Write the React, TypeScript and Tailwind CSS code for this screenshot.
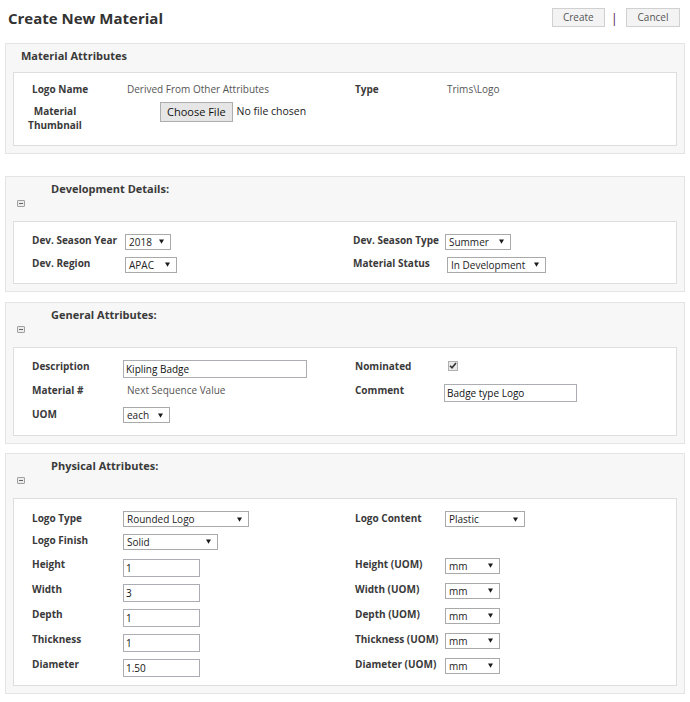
import React from "react";

const LBL = "font-bold text-[10px] leading-[14px] text-[#3a3a3a] pb-[3px] whitespace-nowrap";
const VAL = "text-[10px] leading-[14px] text-[#555] pb-[3px] whitespace-nowrap";

function Arrow() {
  return (
    <svg width="5" height="5" viewBox="0 0 5 5" className="shrink-0">
      <path d="M0 0.5 H5 L2.5 4.8 Z" fill="#1a1a1a" />
    </svg>
  );
}

function Sel({ w, text, extra = "" }: { w: string; text: string; extra?: string }) {
  return (
    <div
      className={`${w} ${extra} h-[16px] border border-[#a9a9a9] bg-white flex items-center justify-between pl-[3px] pr-[6px] text-[10px] leading-[14px] text-[#222]`}
    >
      <span className="whitespace-nowrap">{text}</span>
      <Arrow />
    </div>
  );
}

function Inp({ w, value, extra = "" }: { w: string; value: string; extra?: string }) {
  return (
    <input
      readOnly
      value={value}
      className={`${w} ${extra} h-[18px] border border-[#abadb3] bg-white pl-[2px] text-[10px] leading-[16px] text-[#111] font-['Open_Sans',sans-serif] outline-none`}
    />
  );
}

function Collapse() {
  return (
    <div className="ml-[4px] mt-[3px] w-[8px] h-[7px] border border-[#a0a0a0] bg-[#ececec] rounded-[1px] flex items-center justify-center">
      <div className="w-[4px] h-[1px] bg-[#666]" />
    </div>
  );
}

function Panel({ title, collapsible, mt, children }: { title: string; collapsible: boolean; mt: string; children: React.ReactNode }) {
  return (
    <div className={`${mt} mx-[5px] border border-[#e4e4e4] bg-[#f7f7f7] px-[7px] pb-[7px]`}>
      {collapsible ? (
        <div className="h-[44px] flex flex-col">
          <div className="pt-[4px] ml-[38px] text-[11px] leading-[16px] font-bold text-[#3a3a3a]">{title}</div>
          <Collapse />
        </div>
      ) : (
        <div className="h-[28px] pt-[4px] ml-[8px] text-[11px] leading-[16px] font-bold text-[#3a3a3a]">{title}</div>
      )}
      <div className="border border-[#dedede] bg-white">{children}</div>
    </div>
  );
}

const GRID = "grid grid-cols-[91px_232px_90px_1fr] pl-[18px]";

export default function App() {
  return (
    <div className="w-[690px] min-h-[702px] bg-white font-['Open_Sans',sans-serif] pb-[6px]">
      {/* Top header */}
      <div className="h-[35px] flex items-center justify-between pl-[8px] pr-[10px]">
        <div className="text-[15px] leading-[20px] font-bold text-[#333]">Create New Material</div>
        <div className="flex items-center">
          <div className="w-[53px] h-[19px] border border-[#d0d0d0] bg-[#f3f3f3] flex items-center justify-center text-[10px] text-[#555]">
            Create
          </div>
          <div className="mx-[6px] text-[13px] leading-[14px] text-[#5a1f4f]">|</div>
          <div className="ml-[2px] w-[54px] h-[19px] border border-[#d0d0d0] bg-[#f3f3f3] flex items-center justify-center text-[10px] text-[#555]">
            Cancel
          </div>
        </div>
      </div>

      {/* Material Attributes */}
      <Panel title="Material Attributes" collapsible={false} mt="mt-[8px]">
        <div className="pt-[8px] pb-[11px]">
          <div className={`${GRID} h-[18px] items-center`}>
            <div className={LBL}>Logo Name</div>
            <div className={`${VAL} pl-[4px]`}>Derived From Other Attributes</div>
            <div className={LBL}>Type</div>
            <div className={`${VAL} pl-[2px]`}>Trims\Logo</div>
          </div>
          <div className={`${GRID} h-[32px] mt-[3px] items-start`}>
            <div className="-ml-[4px] mt-[2px] w-[54px] text-center font-bold text-[10px] leading-[14px] text-[#3a3a3a]">
              Material
              <br />
              Thumbnail
            </div>
            <div className="col-span-3 flex items-center ml-[37px]">
              <div className="h-[20px] px-[6px] border border-[#adadad] bg-[#e6e6e6] flex items-center text-[11px] text-[#111]">
                Choose File
              </div>
              <span className="ml-[4px] text-[10.5px] text-[#222]">No file chosen</span>
            </div>
          </div>
        </div>
      </Panel>

      {/* Development Details */}
      <Panel title="Development Details:" collapsible mt="mt-[22px]">
        <div className="pt-[8px] pb-[7px]">
          <div className={`${GRID} h-[23px] items-center`}>
            <div className={LBL}>Dev. Season Year</div>
            <div>
              <Sel w="w-[46px]" text="2018" extra="ml-[2px]" />
            </div>
            <div className={`${LBL} -ml-[2px]`}>Dev. Season Type</div>
            <div>
              <Sel w="w-[66px]" text="Summer" />
            </div>
          </div>
          <div className={`${GRID} h-[23px] items-center`}>
            <div className={LBL}>Dev. Region</div>
            <div>
              <Sel w="w-[52px]" text="APAC" extra="ml-[2px]" />
            </div>
            <div className={`${LBL} -ml-[2px]`}>Material Status</div>
            <div>
              <Sel w="w-[99px]" text="In Development" extra="ml-[2px]" />
            </div>
          </div>
        </div>
      </Panel>

      {/* General Attributes */}
      <Panel title="General Attributes:" collapsible mt="mt-[10px]">
        <div className="pt-[7px] pb-[8px]">
          <div className={`${GRID} h-[24px] items-center`}>
            <div className={LBL}>Description</div>
            <div>
              <Inp w="w-[184px]" value="Kipling Badge" />
            </div>
            <div className={LBL}>Nominated</div>
            <div>
              <div className="ml-[3px] mb-[3px] w-[10px] h-[10px] border border-[#b0b0b0] bg-[#e9e9e9] flex items-center justify-center">
                <svg width="8" height="7" viewBox="0 0 8 7">
                  <path d="M1 3.8 L3 5.8 L7 1" stroke="#333" strokeWidth="1.6" fill="none" />
                </svg>
              </div>
            </div>
          </div>
          <div className={`${GRID} h-[24px] items-center`}>
            <div className={LBL}>Material #</div>
            <div className={`${VAL} pl-[4px]`}>Next Sequence Value</div>
            <div className={LBL}>Comment</div>
            <div>
              <Inp w="w-[133px]" value="Badge type Logo" extra="-ml-[1px]" />
            </div>
          </div>
          <div className={`${GRID} h-[24px] items-center`}>
            <div className={LBL}>UOM</div>
            <div>
              <Sel w="w-[47px]" text="each" />
            </div>
            <div />
            <div />
          </div>
        </div>
      </Panel>

      {/* Physical Attributes */}
      <Panel title="Physical Attributes:" collapsible mt="mt-[9px]">
        <div className="pt-[9px] pb-[7px]">
          <div className={`${GRID} h-[22px] items-center`}>
            <div className={LBL}>Logo Type</div>
            <div>
              <Sel w="w-[126px]" text="Rounded Logo" />
            </div>
            <div className={LBL}>Logo Content</div>
            <div>
              <Sel w="w-[80px]" text="Plastic" />
            </div>
          </div>
          <div className={`${GRID} h-[23px] items-center`}>
            <div className={LBL}>Logo Finish</div>
            <div>
              <Sel w="w-[95px]" text="Solid" />
            </div>
            <div />
            <div />
          </div>
          {[
            ["Height", "1"],
            ["Width", "3"],
            ["Depth", "1"],
            ["Thickness", "1"],
            ["Diameter", "1.50"],
          ].map(([name, v]) => (
            <div key={name} className={`${GRID} h-[25px] items-center`}>
              <div className={LBL}>{name}</div>
              <div>
                <Inp w="w-[77px]" value={v} />
              </div>
              <div className={LBL}>{name} (UOM)</div>
              <div>
                <Sel w="w-[55px]" text="mm" />
              </div>
            </div>
          ))}
        </div>
      </Panel>
    </div>
  );
}
